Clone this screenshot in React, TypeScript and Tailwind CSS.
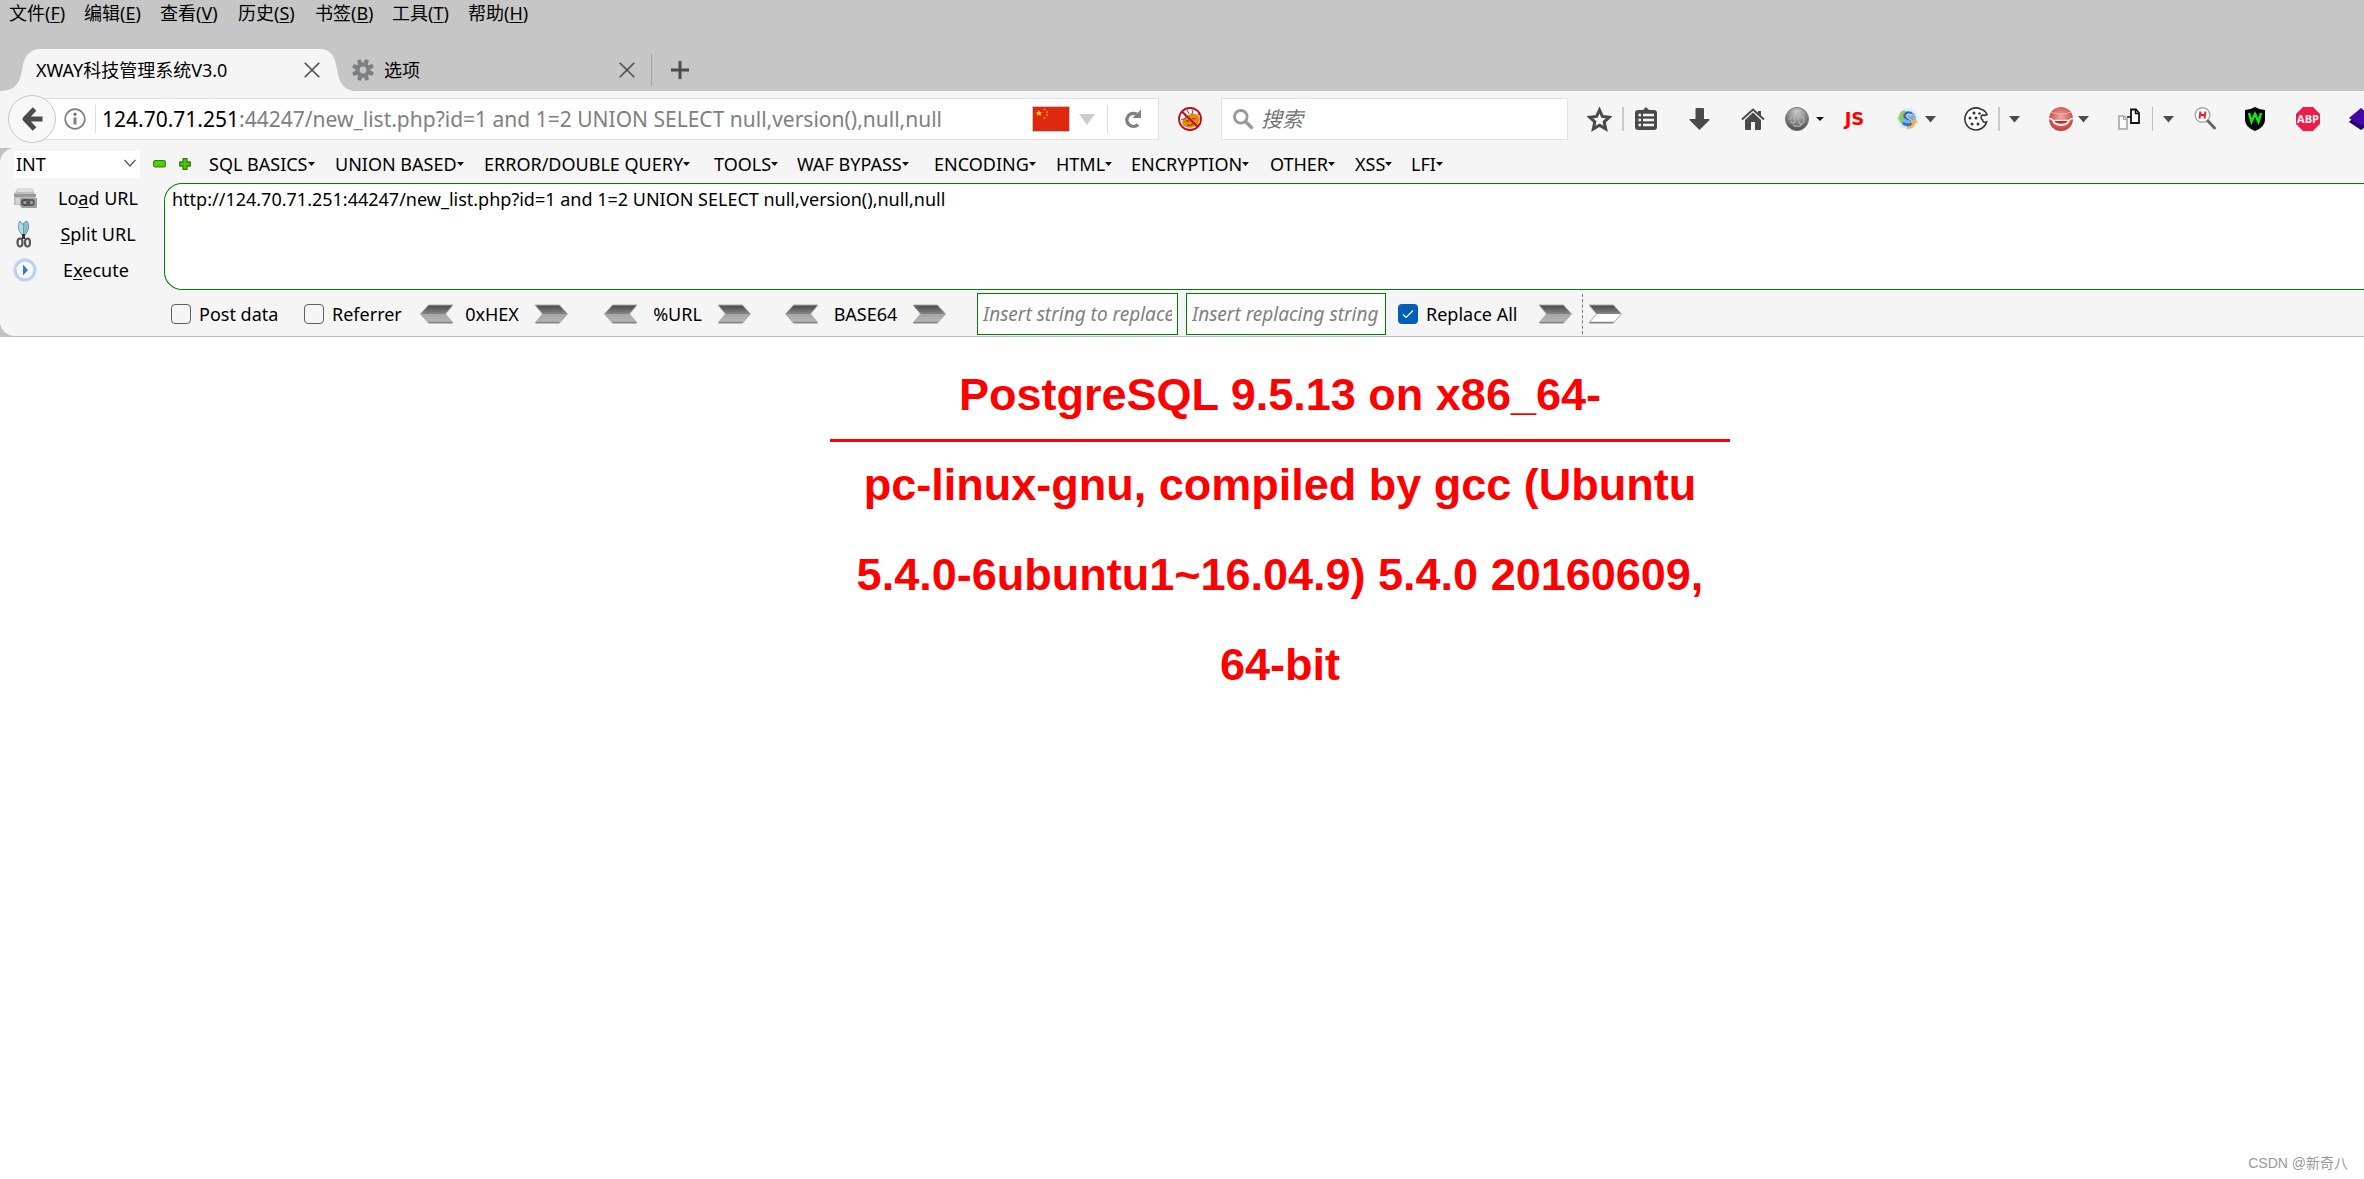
import React, { useId } from "react";

const UI = "font-['Noto_Sans','Noto_Sans_CJK_SC',sans-serif]";

const fileMenus = [
  { name: "文件", key: "F", w: "w-[75px]" },
  { name: "编辑", key: "E", w: "w-[76px]" },
  { name: "查看", key: "V", w: "w-[78px]" },
  { name: "历史", key: "S", w: "w-[77px]" },
  { name: "书签", key: "B", w: "w-[77px]" },
  { name: "工具", key: "T", w: "w-[76px]" },
  { name: "帮助", key: "H", w: "w-[76px]" },
];

const hackMenus = [
  { name: "SQL BASICS", w: "w-[126px]" },
  { name: "UNION BASED", w: "w-[149px]" },
  { name: "ERROR/DOUBLE QUERY", w: "w-[230px]" },
  { name: "TOOLS", w: "w-[83px]" },
  { name: "WAF BYPASS", w: "w-[137px]" },
  { name: "ENCODING", w: "w-[122px]" },
  { name: "HTML", w: "w-[75px]" },
  { name: "ENCRYPTION", w: "w-[139px]" },
  { name: "OTHER", w: "w-[85px]" },
  { name: "XSS", w: "w-[56px]" },
  { name: "LFI", w: "w-[48px]" },
];

function Tool({ label, className, children }: { label: string; className: string; children: React.ReactNode }) {
  return (
    <button type="button" aria-label={label} className={`flex h-6 shrink-0 items-center justify-center ${className}`}>
      {children}
    </button>
  );
}

function Caret({ className, label }: { className: string; label: string }) {
  return (
    <Tool label={label} className={`w-[11px] ${className}`}>
      <svg width="11" height="7" viewBox="0 0 11 7"><path d="M0 0h11L5.500 6.500z" fill="#4c4c4c" /></svg>
    </Tool>
  );
}

function CloseIcon() {
  return (
    <svg width="16" height="16" viewBox="0 0 16 16" fill="none" stroke="#4d4d4d" strokeWidth="1.6"><path d="M.7.700l14.600 14.600M15.300.700L.700 15.300" /></svg>
  );
}

function Arrow({ left, hollow, label, className }: { left?: boolean; hollow?: boolean; label: string; className: string }) {
  const id = useId();
  return (
    <button type="button" aria-label={label} className={`h-5 w-[34px] shrink-0 ${className}`}>
      <svg width="34" height="20" viewBox="0 0 34 20" className={left ? "rotate-y-180" : ""}>
        <defs>
          <linearGradient id={id} x1="0" y1="0" x2="0" y2="1">
            <stop offset="0" stopColor="#484848" />
            <stop offset=".5" stopColor="#858585" />
            <stop offset=".5" stopColor={hollow ? "#ffffff" : "#a5a5a5"} />
            <stop offset="1" stopColor={hollow ? "#ffffff" : "#b8b8b8"} />
          </linearGradient>
        </defs>
        <path d="M1 1h24.500l8 9-8 9H1l7.500-9z" fill={`url(#${id})`} stroke="#aaaaaa" strokeWidth="1" />
        <path d="M2 18.500h23.500" stroke="#858585" strokeWidth="1.500" />
      </svg>
    </button>
  );
}

function MenuBar() {
  return (
    <nav aria-label="菜单" className="flex h-[49px] items-start pl-[9px] text-[18px] leading-[26px] text-black">
      {fileMenus.map((m) => (
        <button key={m.key} type="button" className={`shrink-0 whitespace-nowrap text-left ${m.w}`}>
          {m.name}(<span className="underline underline-offset-2">{m.key}</span>)
        </button>
      ))}
    </nav>
  );
}

function TabStrip() {
  return (
    <div className="flex h-[42px] items-center text-[18px] leading-6 text-black">
      <div className="relative flex h-[42px] w-[358px] shrink-0 items-center pl-9">
        <svg className="absolute inset-0" width="358" height="42" viewBox="0 0 358 42">
          <path d="M0 42c16 0 20-9 22-21C24 7 29 0 42 0h278c11 0 15 8 17 20 2 14 6 22 21 22z" fill="#f5f5f5" />
        </svg>
        <button type="button" className="relative w-[268px] whitespace-nowrap text-left">XWAY科技管理系统V3.0</button>
        <button type="button" aria-label="关闭标签页" className="relative"><CloseIcon /></button>
      </div>
      <div className="-ml-2 flex h-[42px] w-[301px] shrink-0 items-center pl-[2px]">
        <svg width="22" height="24" viewBox="-12 -12 24 24" fill="#7c8084">
          <path fillRule="evenodd" d="M-8 0a8 8 0 1 0 16 0a8 8 0 1 0-16 0zM-3.700 0a3.700 3.700 0 1 1 7.400 0a3.700 3.700 0 1 1-7.400 0z" />
          {[22, 67, 112, 157, 202, 247, 292, 337].map((a) => (
            <path key={a} transform={`rotate(${a})`} d="M-2.700-7l.7-5h4l.7 5z" />
          ))}
        </svg>
        <button type="button" className="ml-[10px] w-[235px] text-left">选项</button>
        <button type="button" aria-label="关闭选项标签页"><CloseIcon /></button>
      </div>
      <span className="h-8 w-px bg-[#a2a2a2]" />
      <button type="button" aria-label="新建标签页" className="ml-[18px]">
        <svg width="20" height="20" viewBox="0 0 20 20" stroke="#4a4a4a" strokeWidth="3"><path d="M10 1v18M1 10h18" /></svg>
      </button>
    </div>
  );
}

function Extensions() {
  return (
    <div className="flex h-full w-[796px] shrink-0 items-center overflow-hidden pl-[19px]">
      <Tool label="书签" className="w-[25px]">
        <svg width="25" height="25" viewBox="0 0 25 25"><path d="M12.500 3l2.900 6.400 7 .8-5.200 4.700 1.500 7-6.200-3.600-6.200 3.600 1.500-7-5.200-4.700 7-.8z" fill="none" stroke="#4a4a4a" strokeWidth="3" /></svg>
      </Tool>
      <span className="ml-[10px] h-6 w-[2px] shrink-0 bg-[#c8c8c8]" />
      <Tool label="书签列表" className="ml-[11px] w-[22px]">
        <svg width="22" height="24" viewBox="0 0 22 24">
          <path d="M8 3l3-3 3 3h5a3 3 0 0 1 3 3v14a3 3 0 0 1-3 3H3a3 3 0 0 1-3-3V6a3 3 0 0 1 3-3z" fill="#4a4a4a" />
          <path d="M3.500 8h2.500M8 8h11M3.500 13h2.500M8 13h11M3.500 18h2.500M8 18h11" stroke="#f5f5f5" strokeWidth="2.600" />
        </svg>
      </Tool>
      <Tool label="下载" className="ml-8 w-[21px]">
        <svg width="21" height="22" viewBox="0 0 21 22"><path d="M6.500 1q0-1 1-1h6.500q1 0 1 1v10h5q1 .3.500 1l-9.500 9.500q-.5.500-1 0L.5 12q-.5-1 .5-1h5.500z" fill="#4a4a4a" /></svg>
      </Tool>
      <Tool label="主页" className="ml-[31px] w-6">
        <svg width="24" height="24" viewBox="0 0 24 24"><path d="M4 13l8-7.500 8 7.500v9q0 1-1 1h-5v-8h-4v8H5q-1 0-1-1z" fill="#4a4a4a" /><path d="M1 12.500L12 2.500l11 10" fill="none" stroke="#4a4a4a" strokeWidth="2" /><path d="M17 4h3v5l-3-3z" fill="#4a4a4a" /></svg>
      </Tool>
      <Tool label="代理" className="ml-5 w-6">
        <svg width="24" height="24" viewBox="0 0 24 24">
          <defs><radialGradient id="ball" cx=".5" cy=".22" r=".8"><stop offset="0" stopColor="#d0d0d0" /><stop offset=".55" stopColor="#858585" /><stop offset="1" stopColor="#454545" /></radialGradient></defs>
          <circle cx="12" cy="12" r="11.500" fill="url(#ball)" stroke="#777" />
          <path d="M5 13c0-4 5-4 5 0s-4 4-4 1M13 13c0-4 6-5 6 0s-5 5-5 1M10 9l3-3 4 2M8 18c3 2 7 2 9-1" fill="none" stroke="#b0b0b0" strokeWidth="1.300" />
        </svg>
      </Tool>
      <Tool label="代理选项" className="ml-[7px] w-2"><svg width="8" height="4" viewBox="0 0 8 4"><path d="M0 0h8L4 4z" fill="#111" /></svg></Tool>
      <button type="button" className="ml-[18px] w-[25px] shrink-0 text-center font-['DejaVu_Sans',sans-serif] text-[18px] leading-6 font-bold text-[#ff0000]">JS</button>
      <Tool label="同步" className="ml-[29px] w-6">
        <svg width="24" height="24" viewBox="0 0 24 24">
          <circle cx="12" cy="12" r="11" fill="#dceffa" />
          <circle cx="12" cy="12" r="8" fill="#7fb2e2" />
          <path d="M16 7c-4-3-9 0-7 3s8 1 7 5-6 3-9 1" fill="none" stroke="#3f68ac" strokeWidth="2.500" />
          <path d="M16 8c-4-2-6 0-5 2s6 2 5 5" fill="none" stroke="#c8e4f8" strokeWidth="1.200" />
          <path d="M9 3C5 4 3 7 3 11l-2-1 4 6 3-5H6c0-3 1-5 3-6z" fill="#8ed03c" />
          <path d="M11 22c5 0 8-3 8-6h3l-4-5-4 5h2c0 2-2 4-5 4z" fill="#f5b04a" />
        </svg>
      </Tool>
      <Caret className="ml-[5px]" label="同步选项" />
      <Tool label="Cookie" className="ml-7 w-6">
        <svg width="24" height="24" viewBox="0 0 24 24">
          <path d="M17 2.200A11 11 0 1 0 22.500 15c-2 1-4 0-4-2.200-2-1-2-3.800 0-4.800 0 0 2 1 4.500-.5C22 5 20 3 17 2.200z" fill="#fff" stroke="#333" strokeWidth="1.600" />
          <g fill="#333"><circle cx="10" cy="6" r="1.500" /><circle cx="15.500" cy="6.500" r="1.300" /><circle cx="6" cy="11" r="1.500" /><circle cx="12" cy="11" r="1.500" /><circle cx="8" cy="17" r="1.500" /><circle cx="14" cy="17" r="1.500" /></g>
        </svg>
      </Tool>
      <span className="ml-[10px] h-6 w-[2px] shrink-0 bg-[#c8c8c8]" />
      <Caret className="ml-[9px]" label="Cookie 选项" />
      <Tool label="用户代理" className="ml-[29px] w-6">
        <svg width="24" height="24" viewBox="0 0 24 24">
          <defs><radialGradient id="red" cx=".5" cy=".4" r=".6"><stop offset="0" stopColor="#eda6a3" /><stop offset=".6" stopColor="#d96662" /><stop offset="1" stopColor="#c43a37" /></radialGradient></defs>
          <circle cx="12" cy="12" r="12" fill="url(#red)" />
          <path d="M2 5q10 4 20 0" fill="none" stroke="#efb1ae" strokeWidth="1" />
          <path d="M0 11.500q2.500 0 4 2h16q1.500-2 4-2" fill="none" stroke="#f5f5f5" strokeWidth="1.500" />
          <path d="M3.500 14h17c-1 6.500-16 6.500-17 0z" fill="#fbeeee" />
          <path d="M5.500 14h13c-1 3.500-12 3.500-13 0z" fill="#c22a28" />
        </svg>
      </Tool>
      <Caret className="ml-[5px]" label="用户代理选项" />
      <Tool label="复制页面" className="ml-[29px] w-[22px]">
        <svg width="22" height="24" viewBox="0 0 22 24" fill="none">
          <path d="M1 9h5l3 3v10H1z" fill="#fafafa" stroke="#a5a5a5" strokeWidth="1.600" /><path d="M5.500 9v3.500H9" stroke="#a5a5a5" strokeWidth="1.200" />
          <path d="M13 2.500h5l3 3.500v10h-8z" fill="#fff" stroke="#111" strokeWidth="1.800" /><path d="M17.500 3v3.500H21M9 10h4" stroke="#111" strokeWidth="1.500" />
        </svg>
      </Tool>
      <span className="ml-3 h-6 w-px shrink-0 bg-[#c0c0c0]" />
      <Caret className="ml-[10px]" label="页面选项" />
      <Tool label="HTTP 查看" className="ml-5 w-[22px]">
        <svg width="22" height="24" viewBox="0 0 22 24">
          <circle cx="8.500" cy="8" r="7.300" fill="#fff" stroke="#aaa" strokeWidth="1.500" />
          <path d="M14 14l6.500 7" stroke="#666" strokeWidth="3" strokeLinecap="round" />
          <path d="M6.500 4.500l-1 7M11.500 4.500l-1 7M6 8h5" stroke="#e8222a" strokeWidth="2" />
        </svg>
      </Tool>
      <Tool label="Wappalyzer" className="ml-[29px] w-5">
        <svg width="20" height="24" viewBox="0 0 20 24"><path d="M10 0q5 3 10 3v10q0 7-10 11Q0 20 0 13V3q5 0 10-3z" fill="#080808" /><path d="M4 6l2.500 8.500L10 7l3.500 7.500L16 6" fill="none" stroke="#19e619" strokeWidth="2.600" /></svg>
      </Tool>
      <button type="button" className="ml-[31px] flex h-6 w-6 shrink-0 items-center justify-center bg-[#ee1c46] font-['Open_Sans',sans-serif] text-[11px] leading-6 font-bold text-white [clip-path:polygon(29%_0,71%_0,100%_29%,100%_71%,71%_100%,29%_100%,0_71%,0_29%)]">ABP</button>
      <Tool label="图层" className="ml-[29px] w-6">
        <svg width="24" height="24" viewBox="0 0 24 24"><path d="M0 15l3-3h18l3 3-12 8z" fill="#230075" /><path d="M0 11L12 1l12 10-12 8z" fill="#4507a3" /></svg>
      </Tool>
    </div>
  );
}

function NavBar() {
  return (
    <div className="flex h-[57px] items-center bg-[#f5f5f5] pb-px pl-2">
      <button type="button" aria-label="后退" className="z-10 -mr-4 flex h-12 w-12 shrink-0 items-center justify-center rounded-full border border-[#c8c8c8] bg-[#f8f8f8]">
        <svg width="22" height="24" viewBox="0 0 22 24" fill="none" stroke="#4a4a4a" strokeWidth="5"><path d="M13.500 2L4 12l9.500 10M5 12h16.500" strokeLinejoin="round" /></svg>
      </button>
      <div className="flex h-[42px] min-w-0 flex-1 items-center border border-[#e2e2e2] bg-white pl-[23px]">
        <button type="button" aria-label="网站信息">
          <svg width="22" height="22" viewBox="0 0 22 22"><circle cx="11" cy="11" r="9.800" fill="none" stroke="#808080" strokeWidth="1.700" /><path d="M11 9.500v7" stroke="#808080" strokeWidth="3" /><circle cx="11" cy="6.300" r="1.700" fill="#808080" /></svg>
        </button>
        <span className="ml-[9px] h-7 w-px bg-[#dcdcdc]" />
        <div role="textbox" aria-label="地址" className="ml-[6px] min-w-0 flex-1 overflow-hidden text-[21px] leading-8 whitespace-nowrap text-[#808080]">
          <span className="text-black">124.70.71.251</span>:44247/new_list.php?id=1 and 1=2 UNION SELECT null,version(),null,null
        </div>
        <svg width="38" height="26" viewBox="0 0 38 26">
          <path d="M.5.500h37v25H.5z" fill="#de2910" stroke="#c8c8c8" />
          <path d="M7 4l.9 2.200h2.300L8.400 7.700l.7 2.300L7 8.600 4.900 10l.7-2.300-1.800-1.500h2.300z" fill="#ffde00" />
          <g fill="#e8901c"><circle cx="12.500" cy="3.500" r="1" /><circle cx="15" cy="6" r="1" /><circle cx="15" cy="9" r="1" /><circle cx="12.500" cy="12" r="1" /></g>
        </svg>
        <button type="button" aria-label="历史地址" className="ml-[9px]"><svg width="16" height="11" viewBox="0 0 16 11"><path d="M0 0h16L8 11z" fill="#ccc" /></svg></button>
        <span className="ml-3 h-7 w-px bg-[#dcdcdc]" />
        <button type="button" aria-label="刷新" className="mx-4">
          <svg width="18" height="20" viewBox="0 0 18 20"><path d="M14 15.500A6.500 6.500 0 1 1 13 5.500" fill="none" stroke="#808080" strokeWidth="3.400" /><path d="M17 .5v8.500H8.500z" fill="#808080" /></svg>
        </button>
      </div>
      <Tool label="拦截" className="mx-[19px] w-6">
        <svg width="24" height="24" viewBox="0 0 24 24">
          <circle cx="12" cy="12" r="11" fill="#fafafa" />
          <path d="M6 11l8-5 6 2 2 4-3 7-7 2-7-2-1-4z" fill="#e8890c" />
          <path d="M3 13l5-2M5 6l3 4M9 3l2 4M15 3l-1 4M20 8l2-3" stroke="#555" />
          <path d="M8 14q2-1 3 1M14 12q2-1 4 0M9 18q3 1 6-1" fill="none" stroke="#7a4300" strokeWidth="1.200" />
          <circle cx="12" cy="12" r="11" fill="none" stroke="#c00818" strokeWidth="1.800" /><path d="M4 4.500l16 15.500" stroke="#c00818" strokeWidth="1.800" />
        </svg>
      </Tool>
      <label className="flex h-[42px] w-[347px] shrink-0 items-center border border-[#e2e2e2] bg-white pl-[11px]">
        <svg width="21" height="21" viewBox="0 0 21 21" fill="none" stroke="#999"><circle cx="7.800" cy="7.800" r="6.300" strokeWidth="2.800" /><path d="M12.500 12.500l7 7" strokeWidth="3.500" /></svg>
        <input aria-label="搜索" placeholder="搜索" className="ml-[7px] min-w-0 flex-1 text-[21px] leading-8 italic outline-none placeholder:text-[#757575]" />
      </label>
      <Extensions />
    </div>
  );
}

function LoadIcon() {
  return (
    <svg width="24" height="24" viewBox="0 0 24 24">
      <path d="M5 2h14l3 6v11H1V8z" fill="#bdbdbd" /><path d="M5 2h14l1 4H4z" fill="#dedede" /><path d="M1 8h22v3H1z" fill="#999" /><path d="M3 12h8v6H3z" fill="#d5d5d5" />
      <path d="M7 12h17v9q0 1-1 1H9q-2-1-2-3z" fill="#a0a0a0" />
      <rect x="9" y="14" width="7" height="5" rx="2.500" fill="none" stroke="#4c4c4c" strokeWidth="1.800" /><rect x="14" y="14" width="7" height="5" rx="2.500" fill="none" stroke="#5c5c5c" strokeWidth="1.800" />
    </svg>
  );
}

function SplitIcon() {
  return (
    <svg width="24" height="28" viewBox="0 0 24 28" fill="none">
      <path d="M8 1c-3 5-2 9 2 14l2 1V6z" fill="#b5d6e2" stroke="#6a99ab" /><path d="M15 1c3 5 2 9-2 14l-1.500 1V3z" fill="#8dbccd" stroke="#6a99ab" />
      <path d="M11.500 14v5" stroke="#333" strokeWidth="3" />
      <ellipse cx="8" cy="22.500" rx="2.500" ry="4" stroke="#555" strokeWidth="2.200" /><ellipse cx="15.500" cy="22.500" rx="2.500" ry="4" stroke="#555" strokeWidth="2.200" />
    </svg>
  );
}

function ExecuteIcon() {
  return (
    <svg width="24" height="24" viewBox="0 0 24 24"><circle cx="12" cy="12" r="11.700" fill="#c2d7f3" /><circle cx="12" cy="12" r="9.500" fill="#a3bad8" /><circle cx="12" cy="12" r="8.700" fill="#f4f7fb" /><path d="M10 6.500l5 5.500-5 5.500z" fill="#3d77c0" /></svg>
  );
}

function Check({ id, label, className }: { id: string; label: string; className: string }) {
  return (
    <div className={`flex shrink-0 items-center gap-2 ${className}`}>
      <input id={id} type="checkbox" className="h-5 w-5 shrink-0 appearance-none rounded-[4px] border border-[#606060] bg-[#f5f5f5]" />
      <label htmlFor={id} className="whitespace-nowrap">{label}</label>
    </div>
  );
}

function HackBar() {
  return (
    <section aria-label="HackBar" className="bg-[#c2c2c2]">
      <div className="flex h-[189px] overflow-hidden rounded-l-[15px] border-b border-[#bcbcbc] bg-[#f5f5f5] text-[18px] leading-6 text-black">
        <div className="flex w-[164px] shrink-0 flex-col">
          <div className="flex h-8 items-center pl-[14px]">
            <div className="relative flex h-[27px] w-[126px] items-center bg-white">
              <select aria-label="类型" className="h-full w-full appearance-none bg-transparent pl-[2px] outline-none"><option>INT</option></select>
              <svg className="pointer-events-none absolute top-2 right-1" width="12" height="8" viewBox="0 0 12 8" fill="none" stroke="#555" strokeWidth="1.200"><path d="M.5 1L6 7l5.500-6" /></svg>
            </div>
          </div>
          <button type="button" className="flex h-9 items-center pl-[13px]"><LoadIcon /><span className="w-[122px] text-center">Lo<u className="underline-offset-2">a</u>d URL</span></button>
          <button type="button" className="flex h-9 items-center pl-3"><SplitIcon /><span className="w-[124px] text-center"><u className="underline-offset-2">S</u>plit URL</span></button>
          <button type="button" className="flex h-9 items-center pl-[13px]"><ExecuteIcon /><span className="w-[118px] text-center">E<u className="underline-offset-2">x</u>ecute</span></button>
        </div>
        <div className="flex min-w-0 flex-1 flex-col">
          <div className="-ml-[11px] flex h-9 items-center pb-[3px]">
            <button type="button" aria-label="减少" className="mr-[13px]"><svg width="13" height="8" viewBox="0 0 13 8"><rect x=".5" y=".5" width="12" height="6.500" rx="1.500" fill="#55cc0b" stroke="#2f7f0a" /></svg></button>
            <button type="button" aria-label="增加" className="mr-[18px]"><svg width="12" height="12" viewBox="0 0 12 12"><path d="M4 .7h4V4h3.300v4H8v3.300H4V8H.7V4H4z" fill="#4fc50a" stroke="#2f7f0a" strokeWidth="1.300" strokeLinejoin="round" /></svg></button>
            {hackMenus.map((m) => (
              <button key={m.name} type="button" className={`flex shrink-0 items-center text-[18px] whitespace-nowrap ${m.w}`}>
                {m.name}
                <svg width="7" height="4" viewBox="0 0 7 4"><path d="M0 0h7L3.500 4z" fill="#111" /></svg>
              </button>
            ))}
          </div>
          <textarea
            aria-label="URL"
            spellCheck={false}
            defaultValue="http://124.70.71.251:44247/new_list.php?id=1 and 1=2 UNION SELECT null,version(),null,null"
            className="block h-[107px] w-full shrink-0 resize-none rounded-l-[18px] border border-r-0 border-[#008000] bg-white px-[7px] py-[3px] text-[18px] leading-6 outline-none"
          />
          <div className="flex h-[46px] shrink-0 items-center pt-px pl-[7px]">
            <Check id="post" label="Post data" className="w-[133px]" />
            <Check id="ref" label="Referrer" className="w-[116px]" />
            <Arrow left label="0xHEX 解码" className="" />
            <button type="button" className="w-20 pr-1">0xHEX</button>
            <Arrow label="0xHEX 编码" className="mr-9" />
            <Arrow left label="URL 解码" className="" />
            <button type="button" className="w-[79px]">%URL</button>
            <Arrow label="URL 编码" className="mr-[34px]" />
            <Arrow left label="BASE64 解码" className="" />
            <button type="button" className="w-[93px]">BASE64</button>
            <Arrow label="BASE64 编码" className="mr-[31px]" />
            <input aria-label="查找字符串" placeholder="Insert string to replace" className="mr-2 h-[42px] w-[201px] shrink-0 border border-[#008000] bg-white px-[5px] text-[19px] italic outline-none placeholder:text-[#808080]" />
            <input aria-label="替换字符串" placeholder="Insert replacing string" className="mr-3 h-[42px] w-[200px] shrink-0 border border-[#008000] bg-white px-[5px] text-[19px] italic outline-none placeholder:text-[#808080]" />
            <div className="flex w-[140px] shrink-0 items-center gap-2">
              <span className="relative flex">
                <input id="all" type="checkbox" defaultChecked className="h-5 w-5 appearance-none rounded-[4px] bg-[#005fb8]" />
                <svg className="pointer-events-none absolute inset-0" width="20" height="20" viewBox="0 0 20 20" fill="none" stroke="#fff" strokeWidth="1.200"><path d="M5 10.500l3 3 7-7" /></svg>
              </span>
              <label htmlFor="all" className="whitespace-nowrap">Replace All</label>
            </div>
            <Arrow label="替换" className="mr-[10px]" />
            <span className="mr-[5px] h-10 w-0 border-l border-dashed border-[#777]" />
            <Arrow hollow label="还原" className="" />
          </div>
        </div>
      </div>
    </section>
  );
}

export default function App() {
  return (
    <div className={`flex min-h-screen flex-col overflow-x-hidden bg-white ${UI}`}>
      <header className="bg-[#c6c6c6]">
        <MenuBar />
        <TabStrip />
        <NavBar />
        <HackBar />
      </header>
      <main className="flex flex-1 justify-center pt-[13px] pl-[196px]">
        <h1 className="box-content h-[89px] w-[900px] border-b-[3px] border-[#ff0000] text-center font-['Liberation_Sans',Arial,sans-serif] text-[45px] leading-[90px] font-bold text-[#ff0000]">
          PostgreSQL 9.5.13 on x86_64-<br />pc-linux-gnu, compiled by gcc (Ubuntu<br />5.4.0-6ubuntu1~16.04.9) 5.4.0 20160609,<br />64-bit
        </h1>
      </main>
      <footer className="pr-4 pb-1 text-right font-['Liberation_Sans','Noto_Sans_CJK_SC',sans-serif] text-[14px] leading-6 text-[#999]">CSDN @新奇八</footer>
    </div>
  );
}
